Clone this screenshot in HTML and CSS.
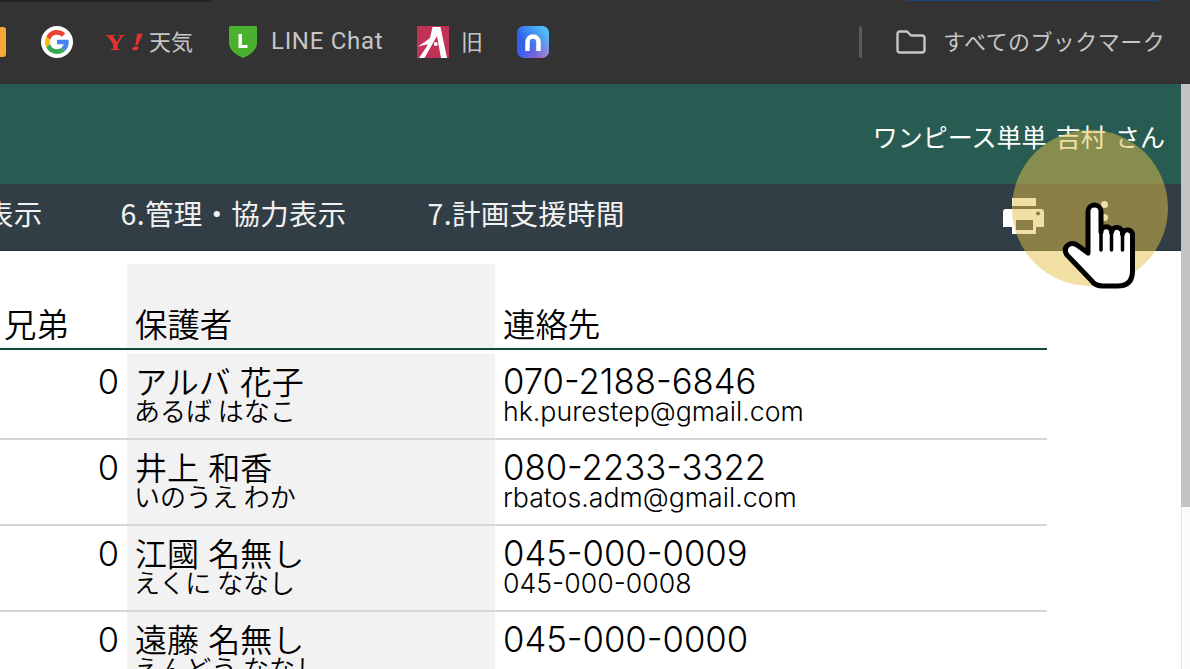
FILE: index.html
```html
<!DOCTYPE html>
<html lang="ja">
<head>
<meta charset="utf-8">
<title>一覧</title>
<link rel="stylesheet" href="styles.css">
</head>
<body>
<div class="toolbar-tabs"><span class="tab-dark"></span><span class="tab-blue"></span></div>
<div class="bookmarks">
  <span class="bm-orange"></span>
  <svg class="bm-google" viewBox="0 0 32 32"><circle cx="16" cy="16" r="16" fill="#fff"/><g transform="translate(16 16) scale(1.13) translate(-16 -16)"><path d="M16 9.600a6.400 6.400 0 0 1 4.400 1.700l3-3A10.600 10.600 0 0 0 6.500 11.300l3.500 2.700A6.400 6.400 0 0 1 16 9.600z" fill="#ea4335"/><path d="M26.400 16.200c0-.8-.1-1.500-.2-2.100H16v4h5.900a5 5 0 0 1-2.200 3.300l3.400 2.600c2-1.800 3.300-4.600 3.300-7.800z" fill="#4285f4"/><path d="M10 18a6.400 6.400 0 0 1 0-4l-3.500-2.700a10.600 10.600 0 0 0 0 9.400z" fill="#fbbc05"/><path d="M16 26.600c2.900 0 5.300-.9 7.100-2.600l-3.400-2.600c-1 .6-2.200 1-3.700 1a6.400 6.400 0 0 1-6-4.400l-3.500 2.700a10.600 10.600 0 0 0 9.500 5.900z" fill="#34a853"/></g></svg>
  <span class="bm-yahoo"><span class="y-letter">Y</span><span class="y-mark">!</span></span>
  <span class="bm-text bm-weather">天気</span>
  <svg class="bm-line" viewBox="0 0 28 32"><path d="M1 0h26q1 0 1 1v16c0 7-7 12-14 15C7 29 0 24 0 17V1q0-1 1-1z" fill="#4cb02f"/><path d="M9.500 8h3.400v11h5.600v3h-9z" fill="#fff"/></svg>
  <span class="bm-text bm-chat">LINE Chat</span>
  <svg class="bm-alogo" viewBox="0 0 32 32"><rect width="32" height="32" fill="#c23256"/><path d="M15.500 1h8L30 32h-6L20 10 7.500 32H2l9-13.500q-5 .5-10 2 7-4.500 12-8.500z" fill="#fff"/><circle cx="18.800" cy="18" r="2" fill="#fff"/></svg>
  <span class="bm-text bm-old">旧</span>
  <svg class="bm-n" viewBox="0 0 32 32"><defs><linearGradient id="ng" x1="0" y1="0" x2="1" y2="1"><stop offset="0" stop-color="#2b5cf0"/><stop offset=".5" stop-color="#3a62ea"/><stop offset="1" stop-color="#c760c8"/></linearGradient><linearGradient id="nh" x1="1" y1="0" x2="0.300" y2="0.600"><stop offset="0" stop-color="#55d2f8"/><stop offset="1" stop-color="#55d2f8" stop-opacity="0"/></linearGradient></defs><rect width="32" height="32" rx="7" fill="url(#ng)"/><rect width="32" height="32" rx="7" fill="url(#nh)"/><path d="M10.500 25V16a5.500 5.500 0 0 1 11 0v9" fill="none" stroke="#fff" stroke-width="4.500"/></svg>
  <span class="bm-sep"></span>
  <svg class="bm-folder" viewBox="0 0 32 24"><path d="M2.500 4q0-2.500 2.500-2.500h7l4 4h11q2.500 0 2.500 2.500v12q0 2.500-2.500 2.500H5q-2.500 0-2.500-2.500z" fill="none" stroke="#c6c6c6" stroke-width="2.400" stroke-linejoin="round"/></svg>
  <span class="bm-text bm-all">すべてのブックマーク</span>
</div>
<div class="page">
  <main class="content">
    <header class="site-head"><span class="user">ワンピース単単 吉村 さん</span></header>
    <nav class="site-nav">
      <a class="nav-cut">表示</a>
      <a class="nav-item">6.管理・協力表示</a>
      <a class="nav-item">7.計画支援時間</a>
      <span class="nav-tools">
        <svg class="printer" viewBox="0 0 41 36"><path fill-rule="evenodd" fill="#fff" d="M9 0h24v8H9zM3 11h35q3 0 3 3v15H33v7H9v-7H0V14q0-3 3-3zM13 22v10h17V22zM35 13.500a2 2 0 1 0 .01 0z"/></svg>
        <span class="kebab"><i></i><i></i><i></i></span>
      </span>
    </nav>
    <section class="table">
      <div class="row head">
        <div class="c-sib">兄弟</div>
        <div class="c-name">保護者</div>
        <div class="c-contact">連絡先</div>
      </div>
      <div class="row">
        <div class="c-sib num">0</div>
        <div class="c-name"><span class="big">アルバ 花子</span><span class="small">あるば はなこ</span></div>
        <div class="c-contact"><span class="big latin">070-2188-6846</span><span class="small latin">hk.purestep@gmail.com</span></div>
      </div>
      <div class="row">
        <div class="c-sib num">0</div>
        <div class="c-name"><span class="big">井上 和香</span><span class="small">いのうえ わか</span></div>
        <div class="c-contact"><span class="big latin">080-2233-3322</span><span class="small latin">rbatos.adm@gmail.com</span></div>
      </div>
      <div class="row">
        <div class="c-sib num">0</div>
        <div class="c-name"><span class="big">江國 名無し</span><span class="small">えくに ななし</span></div>
        <div class="c-contact"><span class="big latin">045-000-0009</span><span class="small latin">045-000-0008</span></div>
      </div>
      <div class="row">
        <div class="c-sib num">0</div>
        <div class="c-name"><span class="big">遠藤 名無し</span><span class="small">えんどう ななし</span></div>
        <div class="c-contact"><span class="big latin">045-000-0000</span></div>
      </div>
    </section>
  </main>
  <aside class="scrollbar"><span class="thumb"></span><span class="track"></span></aside>
</div>
<div class="spot"></div>
<svg class="hand" viewBox="0 0 84 96"><path d="M27 55V13.500a6.500 6.500 0 0 1 13 0V34a5.200 5.200 0 0 1 10.500 0 5.500 5.500 0 0 1 11 2 5 5 0 0 1 10 2v35q0 15-15 15H42q-8 0-12-6L6 57q-4-6 1-10 4-3 9 0z" fill="#fff" stroke="#000" stroke-width="5" stroke-linejoin="round"/><path d="M40 34v18M50.500 34v18M61.500 36v16" stroke="#000" stroke-width="3.500" fill="none" stroke-linecap="round"/></svg>
</body>
</html>
```
FILE: styles.css
```css
* { box-sizing: border-box; }
html, body { margin: 0; padding: 0; }
body {
  width: 1190px;
  height: 669px;
  overflow: hidden;
  background: #fff;
  position: relative;
  font-family: "Noto Sans CJK JP", "Noto Sans", sans-serif;
  color: #000;
}
.toolbar-tabs {
  height: 2px;
  background: #333;
  display: flex;
  justify-content: space-between;
  padding-right: 33px;
}
.tab-dark { width: 212px; background: #232323; }
.tab-blue { width: 250px; height: 1px; background: #17477a; }
.bookmarks {
  height: 82px;
  background: #333;
  border-bottom: 1px solid #2d2d2d;
  display: flex;
  align-items: center;
  padding-bottom: 1px;
  color: #c6c6c6;
}
.bm-text { font-size: 22px; line-height: 30px; white-space: nowrap; color: #c6c6c6; margin-bottom: 5px; }
.bm-orange { width: 6px; height: 30px; background: #f5a936; border-radius: 0 3px 3px 0; }
.bm-google { width: 32px; height: 32px; margin-left: 35px; }
.bm-yahoo {
  margin-left: 32px;
  width: 32px;
  display: flex;
  align-items: baseline;
  font-family: "Liberation Serif", serif;
  font-weight: bold;
  line-height: 30px;
  color: #e8302f;
  white-space: nowrap;
}
.y-letter { display: inline-block; font-size: 23px; transform: scaleX(1.2); transform-origin: left center; }
.y-mark { display: inline-block; font-size: 25px; transform: skewX(-18deg) scaleX(1.5); margin-left: 11px; }
.bm-weather { margin-left: 12px; width: 44px; }
.bm-line { width: 28px; height: 32px; margin-left: 36px; }
.bm-chat { margin-left: 14px; margin-bottom: 3px; width: 112px; font-family: Roboto, sans-serif; font-size: 24px; letter-spacing: .7px; }
.bm-alogo { width: 32px; height: 32px; margin-left: 34px; }
.bm-old { margin-left: 12px; width: 23px; }
.bm-n { width: 32px; height: 32px; margin-left: 33px; }
.bm-sep { width: 3px; height: 32px; margin-left: 310px; background: #5a5a5a; border-radius: 2px; }
.bm-folder { width: 32px; height: 24px; margin-left: 33px; }
.bm-all { margin-left: 16px; letter-spacing: .45px; }

.page { display: flex; height: 585px; }
.content { width: 1181px; flex: none; overflow: hidden; }
.site-head {
  height: 100px;
  background: #285b52;
  display: flex;
  align-items: flex-end;
  justify-content: flex-end;
  padding: 0 16px 30px 0;
}
.user { color: #fff; font-size: 25px; line-height: 36px; font-weight: 400; word-spacing: 3.600px; white-space: nowrap; }
.site-nav {
  height: 67px;
  background: #323e46;
  border-bottom: 1px solid #233;
  display: flex;
  align-items: center;
  color: #fff;
  font-size: 28.500px;
  letter-spacing: .3px;
  white-space: nowrap;
  padding-bottom: 10px;
}
.site-nav a { color: #f2f2f2; }
.nav-cut { margin-left: -15px; }
.nav-item { margin-left: 78px; }
.nav-item + .nav-item { margin-left: 81px; }
.nav-tools { margin-left: auto; margin-right: 72px; margin-top: 10px; display: flex; align-items: flex-start; }
.printer { width: 41px; height: 36px; margin-top: -3px; }
.kebab { margin-left: 57px; display: flex; flex-direction: column; gap: 6px; width: 8px; }
.kebab i { width: 7px; height: 7px; border-radius: 50%; background: #fff; }

.table { width: 1047px; padding-top: 13px; }
.row {
  display: grid;
  grid-template-columns: 127px 368px 552px;
  height: 86px;
  border-bottom: 2px solid #d6d6d6;
}
.row.head { border-bottom: 2px solid #13463c; margin-bottom: 4px; }
.row > div { padding: 0 8px; }
.c-name { background: #f2f2f2; }
.head > div {
  font-size: 32.400px;
  font-weight: 350;
  line-height: 40px;
  display: flex;
  align-items: flex-end;
  padding-bottom: 5px;
}
.head .c-sib { padding-left: 4px; }
.num {
  text-align: right;
  font-family: Inter, "Noto Sans CJK JP", sans-serif;
  font-size: 34.500px;
  font-weight: 300;
  line-height: 40px;
  padding-top: 8px !important;
}
.big, .small { display: block; white-space: nowrap; font-weight: 350; }
.big { font-size: 32px; line-height: 36px; padding-top: 8px; word-spacing: 2px; }
.small { font-size: 26px; line-height: 24px; margin-top: 0; margin-left: -1px; }
.latin { font-family: Inter, sans-serif; font-weight: 300; margin-left: 0; }
.big.latin { font-size: 34.700px; padding-top: 9px; }
.small.latin { font-size: 26.700px; }

.scrollbar { width: 9px; flex: none; display: flex; flex-direction: column; }
.thumb { height: 423px; background: #c3c3c3; }
.track { flex: 1; background: #fbfbfb; border-left: 1px solid #e4e4e4; }

.spot {
  position: absolute;
  left: 1012px;
  top: 130px;
  width: 156px;
  height: 156px;
  border-radius: 50%;
  background: rgba(228, 192, 74, .5);
}
.hand { position: absolute; left: 1061px; top: 198px; width: 84px; height: 96px; }
```
